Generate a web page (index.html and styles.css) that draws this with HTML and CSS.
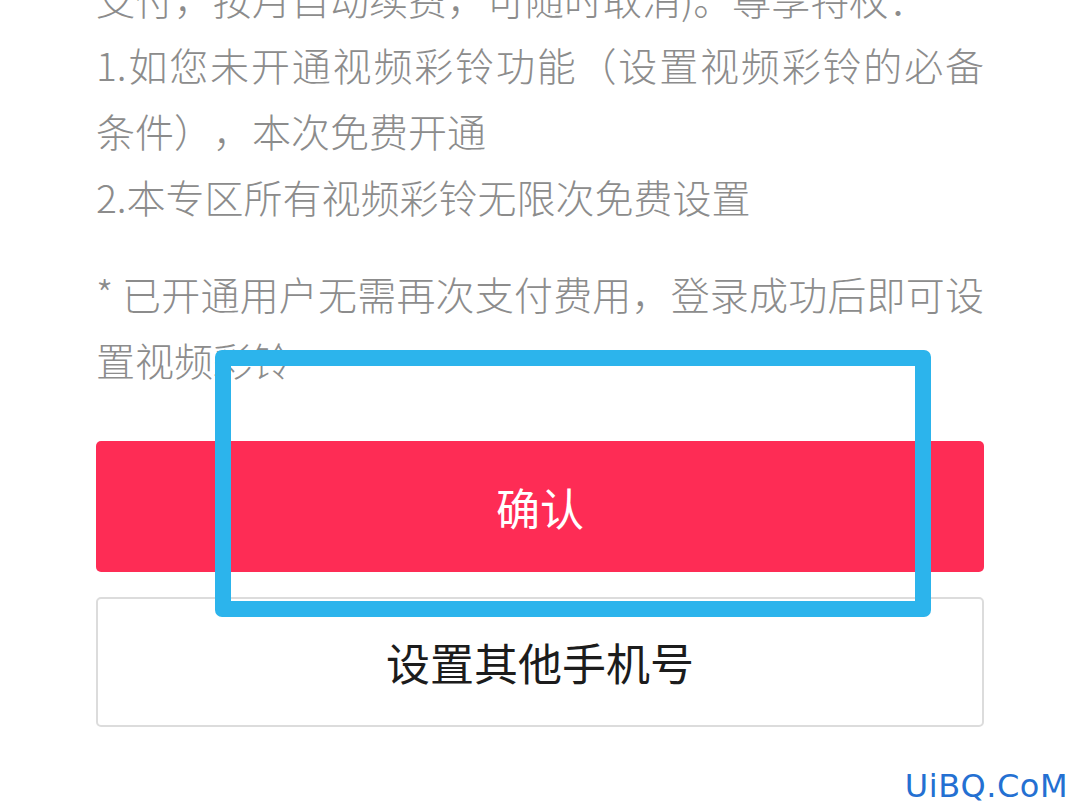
FILE: index.html
```html
<!DOCTYPE html>
<html lang="zh-CN">
<head>
    <meta charset="UTF-8">
    <meta name="viewport" content="width=device-width, initial-scale=1.0">
    <title>视频彩铃</title>
    <link rel="stylesheet" href="styles.css">
</head>
<body>
    <div class="page">
        <p class="desc">
            <span class="line">支付，按月自动续费，可随时取消)。尊享特权：</span>
            <span class="line">1.如您未开通视频彩铃功能（设置视频彩铃的必备条件），本次免费开通</span>
            <span class="line">2.本专区所有视频彩铃无限次免费设置</span>
        </p>
        <p class="desc note">* 已开通用户无需再次支付费用，登录成功后即可设置视频彩铃</p>

        <div class="actions">
            <button class="btn btn-primary" type="button">确认</button>
            <button class="btn btn-outline" type="button">设置其他手机号</button>
        </div>

        <div class="highlight"></div>
    </div>

    <div class="watermark">UiBQ.CoM</div>
</body>
</html>
```

FILE: styles.css
```css
body {
    margin: 0;
    background-color: #fff;
    font-family: "Noto Sans CJK SC", "Noto Sans", sans-serif;
    overflow: hidden;
    height: 810px;
    position: relative;
}

.page {
    position: relative;
    padding: 0 96px;
    margin-top: -35px;
}

.desc {
    margin: 0;
    font-size: 39px;
    font-weight: 300;
    line-height: 66px;
    color: #8c8c8c;
    text-align: justify;
    text-spacing-trim: space-all;
}

.desc .line {
    display: block;
}

.note {
    margin-top: 31px;
}

.actions {
    display: flex;
    flex-direction: column;
    gap: 25px;
    margin-top: 49px;
}

.btn {
    width: 100%;
    height: 131px;
    border-radius: 5px;
    font-family: inherit;
    font-size: 44px;
    cursor: pointer;
}

.btn-primary {
    background-color: #fe2c55;
    border: none;
    color: #fff;
}

.btn-outline {
    height: 130px;
    background-color: #fff;
    border: 2px solid #dcdcdc;
    color: #1c1c1c;
}

/* annotation box drawn over the screenshot */
.highlight {
    position: absolute;
    left: 215px;
    top: 385px;
    width: 684px;
    height: 235px;
    border: 16px solid #2cb4ec;
    border-radius: 7px;
}

.watermark {
    position: absolute;
    right: 12px;
    bottom: 5px;
    font-family: "DejaVu Sans", sans-serif;
    font-size: 32px;
    letter-spacing: 0.5px;
    color: #2470d2;
}
```
